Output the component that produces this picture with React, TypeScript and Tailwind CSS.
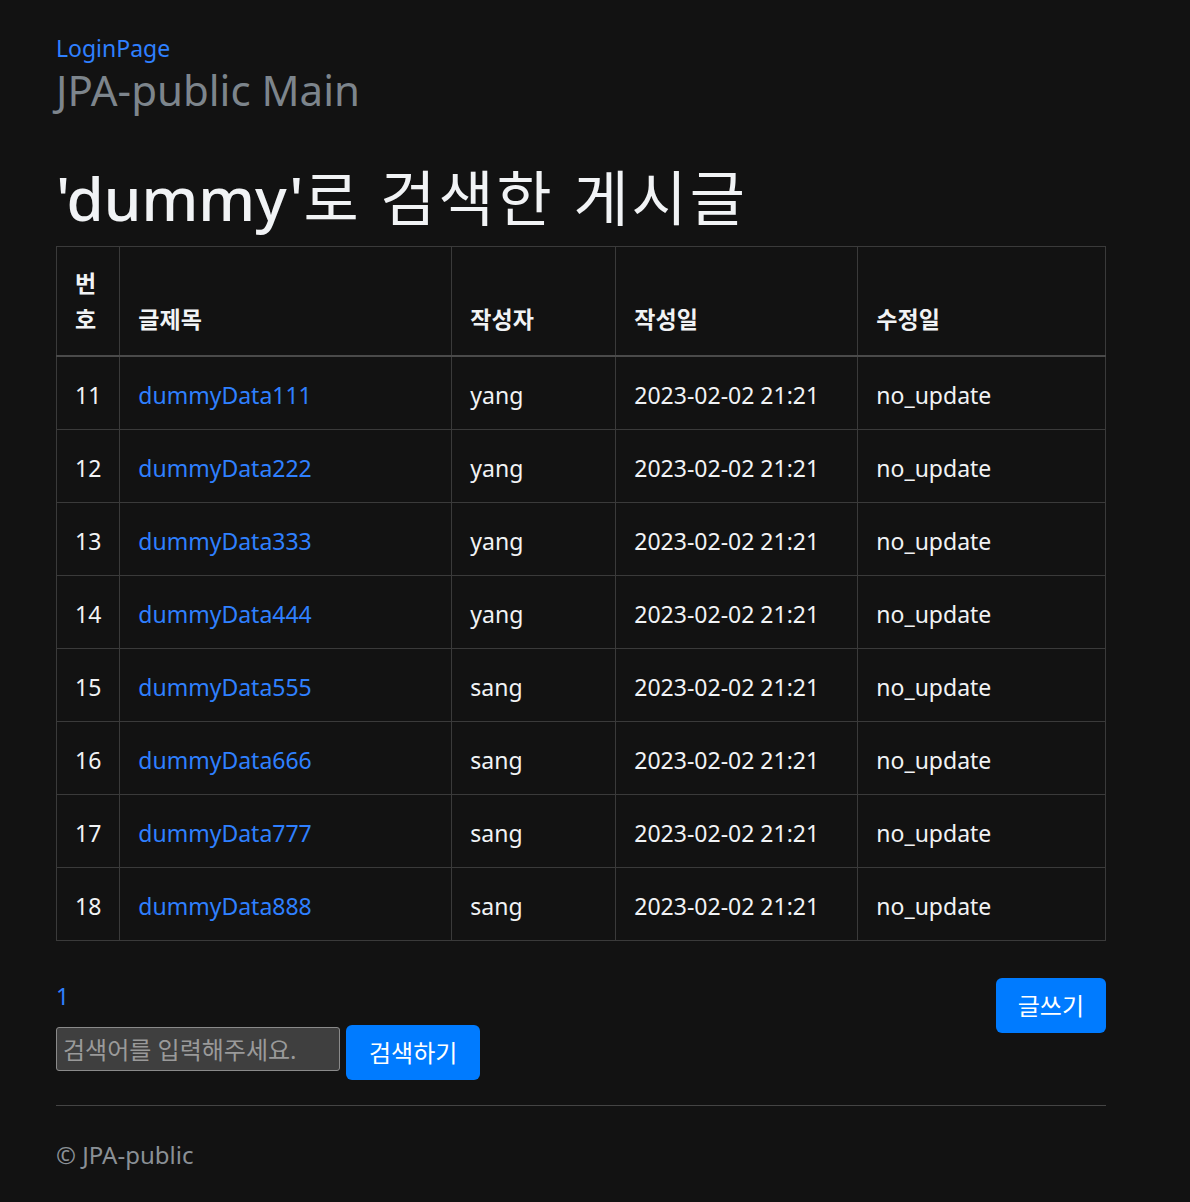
import React from "react";

const rows = [
  { id: 11, title: "dummyData111", writer: "yang" },
  { id: 12, title: "dummyData222", writer: "yang" },
  { id: 13, title: "dummyData333", writer: "yang" },
  { id: 14, title: "dummyData444", writer: "yang" },
  { id: 15, title: "dummyData555", writer: "sang" },
  { id: 16, title: "dummyData666", writer: "sang" },
  { id: 17, title: "dummyData777", writer: "sang" },
  { id: 18, title: "dummyData888", writer: "sang" },
];

const font = {
  fontFamily: '"Noto Sans", "Noto Sans CJK KR", sans-serif',
};

const App = () => {
  return (
    <div className="min-h-[1202px] bg-[#121212] text-[#f1f3f5]" style={font}>
      <div className="w-[1050px] ml-[56px] pt-[30px] text-[23px] leading-[36px]">
        <a href="#" className="block text-[#2f80ff]">
          LoginPage
        </a>
        <h3 className="mt-[-2px] text-[42px] leading-[52px] text-[#7d858c]">
          JPA-public Main
        </h3>

        <h1 className="mt-[46px] mb-[12px] text-[60px] leading-[72px] font-medium">
          'dummy'
          <span className="font-normal tracking-[3px]">로 검색한 게시글</span>
        </h1>

        <table className="w-full border-collapse border border-[#3a3a3a]">
          <thead>
            <tr className="border-b-2 border-[#4a4a4a] text-left align-bottom font-bold">
              <th className="w-[62px] border border-[#3a3a3a] px-[18px] py-[18px]">
                번호
              </th>
              <th className="w-[332px] border border-[#3a3a3a] px-[18px] py-[18px]">
                글제목
              </th>
              <th className="w-[164px] border border-[#3a3a3a] px-[18px] py-[18px]">
                작성자
              </th>
              <th className="w-[242px] border border-[#3a3a3a] px-[18px] py-[18px]">
                작성일
              </th>
              <th className="border border-[#3a3a3a] px-[18px] py-[18px]">
                수정일
              </th>
            </tr>
          </thead>
          <tbody>
            {rows.map((r) => (
              <tr key={r.id}>
                <td className="border border-[#3a3a3a] px-[18px] pt-[20px] pb-[16px]">
                  {r.id}
                </td>
                <td className="border border-[#3a3a3a] px-[18px] pt-[20px] pb-[16px]">
                  <a href="#" className="text-[#2f80ff]">
                    {r.title}
                  </a>
                </td>
                <td className="border border-[#3a3a3a] px-[18px] pt-[20px] pb-[16px]">
                  {r.writer}
                </td>
                <td className="border border-[#3a3a3a] px-[18px] pt-[20px] pb-[16px]">
                  2023-02-02 21:21
                </td>
                <td className="border border-[#3a3a3a] px-[18px] pt-[20px] pb-[16px]">
                  no_update
                </td>
              </tr>
            ))}
          </tbody>
        </table>

        <div className="mt-[37px] flex justify-between items-start">
          <div>
            <a href="#" className="block text-[#2f80ff]">
              1
            </a>
            <div className="mt-[11px] flex items-start gap-[6px]">
              <input
                placeholder="검색어를 입력해주세요."
                className="mt-[2px] w-[284px] h-[44px] rounded-[3px] border border-[#8a8a8a] bg-[#3f3f3f] px-[6px] text-[24px] text-white placeholder:text-[#9a9a9a] outline-none"
              />
              <button className="h-[55px] px-[23px] rounded-[6px] bg-[#007bff] text-[24px] text-white">
                검색하기
              </button>
            </div>
          </div>
          <button className="h-[55px] px-[22px] rounded-[6px] bg-[#007bff] text-[24px] text-white">
            글쓰기
          </button>
        </div>

        <hr className="mt-[25px] border-t border-[#444]" />

        <p className="mt-[31px] text-[24px] text-[#8a9096]">© JPA-public</p>
      </div>
    </div>
  );
};

export default App;
